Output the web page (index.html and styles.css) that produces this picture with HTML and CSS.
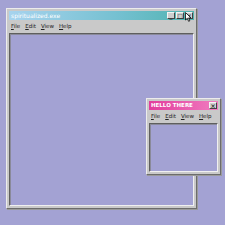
FILE: index.html
```html
<!DOCTYPE html>
<html lang="en">
<head>
    <meta charset="UTF-8">
    <title>spiritualized.exe</title>
    <link rel="stylesheet" href="styles.css">
</head>
<body>
    <div class="window main-window">
        <div class="title-bar teal">
            <span class="title">spiritualized.exe</span>
            <div class="title-buttons">
                <span class="tb-btn">_</span>
                <span class="tb-btn">&#9633;</span>
                <span class="tb-btn">&times;</span>
            </div>
        </div>
        <div class="menu-bar">
            <span><u>F</u>ile</span>
            <span><u>E</u>dit</span>
            <span><u>V</u>iew</span>
            <span><u>H</u>elp</span>
        </div>
        <div class="content"></div>
    </div>

    <!-- mouse pointer over the close button -->
    <svg class="cursor" width="7" height="10" viewBox="0 0 7 10">
        <path d="M0.5 0.5 L0.5 8 L2.3 6.3 L3.6 9.3 L4.8 8.8 L3.6 5.9 L6 5.9 Z" fill="#fff" stroke="#000" stroke-width="0.8"/>
    </svg>

    <div class="window popup">
        <div class="title-bar pink">
            <span class="title bold">HELLO THERE</span>
            <div class="title-buttons">
                <span class="tb-btn">&times;</span>
            </div>
        </div>
        <div class="menu-bar">
            <span><u>F</u>ile</span>
            <span><u>E</u>dit</span>
            <span><u>V</u>iew</span>
            <span><u>H</u>elp</span>
        </div>
        <div class="content"></div>
    </div>
</body>
</html>
```

FILE: styles.css
```css
/* Desktop */
body {
    margin: 0;
    width: 225px;
    height: 225px;
    background: #a3a2d3;
    font-family: "DejaVu Sans", sans-serif;
    position: relative;
    overflow: hidden;
    padding: 8px 0 0 6px;
    box-sizing: border-box;
}

/* Window frame */
.window {
    background: #c9c9c9;
    border: 1px solid;
    border-color: #ececec #6c6c6c #6c6c6c #ececec;
    box-shadow: 1px 1px 0 #9a9a9a;
    padding: 2px;
    display: flex;
    flex-direction: column;
    box-sizing: border-box;
}

.main-window {
    width: 191px;
    height: 201px;
}

.popup {
    position: absolute;
    left: 146px;
    top: 98px;
    width: 75px;
    height: 77px;
}

/* Title bar */
.title-bar {
    height: 9px;
    display: flex;
    align-items: center;
    justify-content: space-between;
    padding: 0 1px 0 2px;
}

.teal {
    background: linear-gradient(to right, #a7d3ee, #74c0d0 60%, #4fb3b0);
}

.pink {
    background: linear-gradient(to right, #e23d9c, #f07cc0);
}

.title {
    color: #fff;
    font-size: 6px;
    line-height: 9px;
    white-space: nowrap;
}

.title.bold {
    font-weight: bold;
    font-size: 5.5px;
}

.title-buttons {
    display: flex;
    gap: 1px;
}

.tb-btn {
    width: 8px;
    height: 7px;
    background: #cfcfcf;
    border: 1px solid;
    border-color: #f4f4f4 #444 #444 #f4f4f4;
    box-sizing: border-box;
    font-size: 6px;
    line-height: 5px;
    text-align: center;
    color: #222;
    font-weight: bold;
}

/* Menu */
.menu-bar {
    height: 12px;
    display: flex;
    align-items: center;
    gap: 5px;
    padding-left: 2px;
    font-size: 5.5px;
    color: #222;
}

/* Client area */
.content {
    flex: 1;
    margin: 1px 0 0 0;
    background: #a3a2d3;
    border: 1px solid;
    border-color: #5e5e5e #f0f0f0 #f0f0f0 #5e5e5e;
    box-shadow: inset 1px 1px 0 #8a8a9a;
}

.cursor {
    position: absolute;
    left: 185px;
    top: 12px;
    z-index: 2;
}
```
